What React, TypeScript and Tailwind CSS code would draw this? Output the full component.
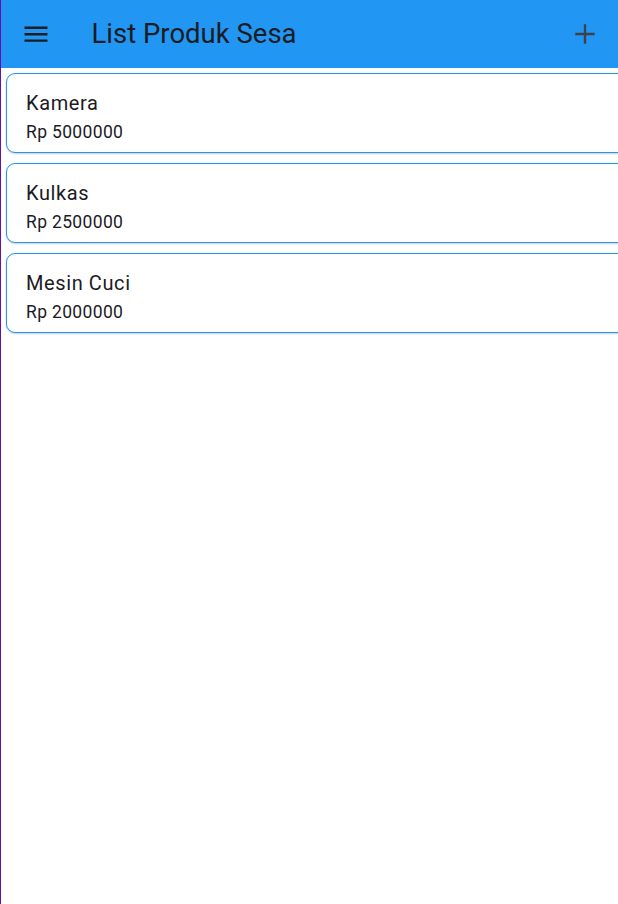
import React from "react";

const items = [
  { name: "Kamera", price: "Rp 5000000" },
  { name: "Kulkas", price: "Rp 2500000" },
  { name: "Mesin Cuci", price: "Rp 2000000" },
];

export default function App() {
  return (
    <div
      className="relative w-[618px] h-[904px] overflow-hidden bg-white border-l-[1.5px] border-[#6a0dad]"
      style={{ fontFamily: "Roboto, 'Noto Sans', sans-serif" }}
    >
      <header className="h-[68px] bg-[#2196f3] flex items-center">
        <div className="ml-[22.5px] w-[24px] flex justify-center">
          <svg width="24" height="16" viewBox="0 0 24 16">
            <path d="M0.5 3.3h23M0.5 9.7h23M0.5 16.1h23" stroke="#1d1d21" strokeWidth="2.4" fill="none" transform="translate(0,-1.5)" />
          </svg>
        </div>
        <h1 className="ml-[44px] text-[27.5px] leading-none text-[#1c1c22] font-normal">List Produk Sesa</h1>
        <div className="ml-auto mr-[23px]">
          <svg width="20" height="20" viewBox="0 0 20 20">
            <path d="M10 0.3v19.4M0.3 10h19.4" stroke="#3f414a" strokeWidth="2.4" fill="none" />
          </svg>
        </div>
      </header>
      <div className="flex flex-col gap-[10px] pt-[5px] pl-[5px] w-[630px]">
        {items.map((it) => (
          <div
            key={it.name}
            className="h-[80px] rounded-[9px] border border-[#2196f3] bg-white shadow-[0_1px_2px_rgba(0,0,0,0.2)] flex flex-col pt-[14.5px] pl-[19px]"
          >
            <div className="text-[20px] leading-[28px] tracking-[0.6px] text-[#1c1b1f]">{it.name}</div>
            <div className="mt-[3.5px] text-[17.5px] leading-[24px] tracking-[0.35px] text-[#1c1b1f]">{it.price}</div>
          </div>
        ))}
      </div>
    </div>
  );
}
